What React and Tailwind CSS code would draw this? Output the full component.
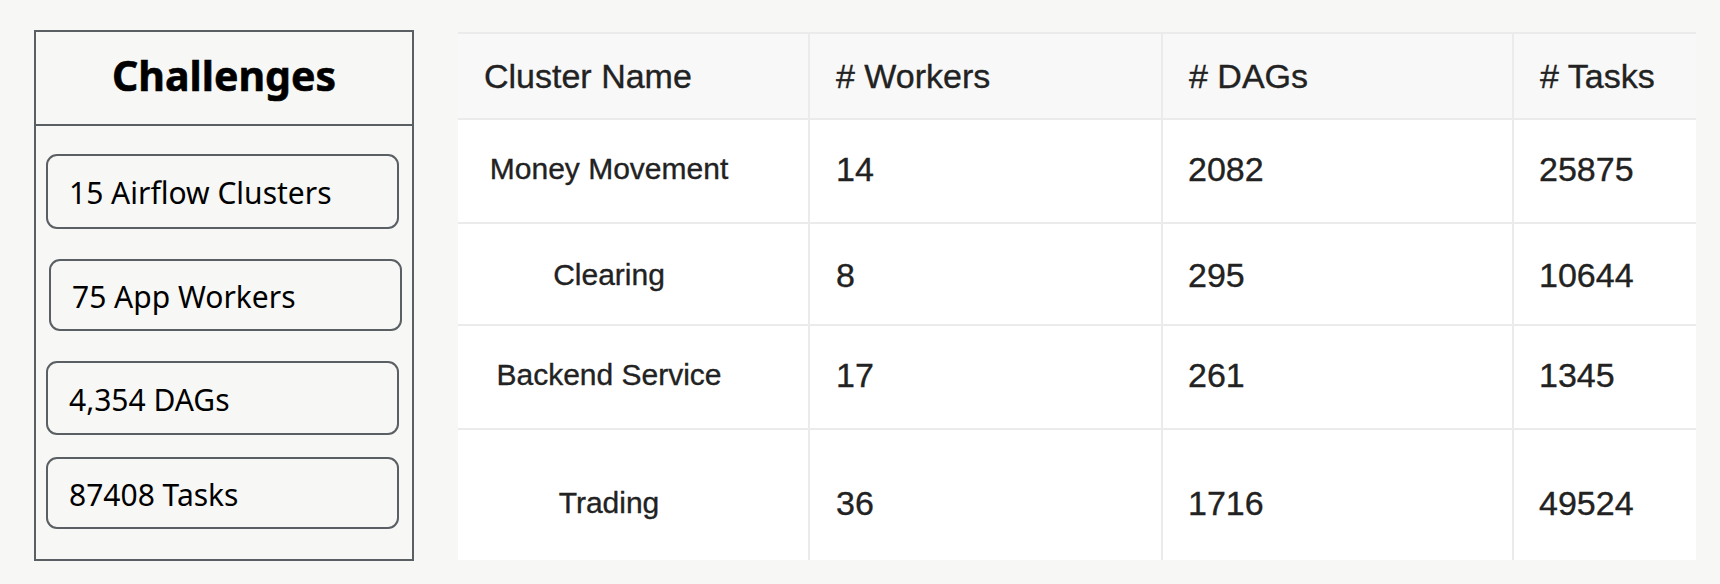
import React from "react";

const boxes = [
  { text: "15 Airflow Clusters", cls: "mt-[28px] ml-[10px] h-[75px]" },
  { text: "75 App Workers", cls: "mt-[30px] ml-[13px] h-[72px]" },
  { text: "4,354 DAGs", cls: "mt-[30px] ml-[10px] h-[74px]" },
  { text: "87408 Tasks", cls: "mt-[22px] ml-[10px] h-[72px]" },
];

const rows = [
  { name: "Money Movement", w: "14", d: "2082", t: "25875", h: "h-[104px]", pad: "pb-[5px]", last: false },
  { name: "Clearing", w: "8", d: "295", t: "10644", h: "h-[102px]", pad: "pt-[2px]", last: false },
  { name: "Backend Service", w: "17", d: "261", t: "1345", h: "h-[104px]", pad: "pb-[5px]", last: false },
  { name: "Trading", w: "36", d: "1716", t: "49524", h: "h-[130px]", pad: "pt-[16px]", last: true },
];

const colW = ["w-[352px]", "w-[353px]", "w-[351px]", "w-[182px]"];

export default function App() {
  return (
    <div className="w-[1720px] h-[584px] bg-[#f7f7f5] flex items-start overflow-hidden">
      {/* Left panel */}
      <div className="ml-[34px] mt-[30px] w-[380px] h-[531px] border-2 border-[#5a5f63] flex flex-col">
        <div className="h-[94px] flex items-center justify-center pb-[6px] border-b-2 border-[#5a5f63]">
          <span
            className="text-[41px] font-bold text-black leading-none [-webkit-text-stroke:0.6px_#000]"
            style={{ fontFamily: '"Noto Sans", sans-serif' }}
          >
            Challenges
          </span>
        </div>
        {boxes.map((b) => (
          <div
            key={b.text}
            className={`${b.cls} w-[353px] border-2 border-[#5a5f63] rounded-[11px] flex items-center pl-[21px] pt-[3px]`}
          >
            <span className="text-[30px] text-black leading-none" style={{ fontFamily: '"Noto Sans", sans-serif' }}>
              {b.text}
            </span>
          </div>
        ))}
      </div>

      {/* Table */}
      <div
        className="ml-[44px] mt-[32px] w-[1238px] flex flex-col text-[#222222] [-webkit-text-stroke:0.35px_#222222]"
        style={{ fontFamily: '"Liberation Sans", Arial, sans-serif' }}
      >
        <div className="flex h-[88px] bg-[#f8f8f8] border-t-2 border-b-2 border-[#ebebeb]">
          {["Cluster Name", "# Workers", "# DAGs", "# Tasks"].map((h, i) => (
            <div
              key={h}
              className={`${colW[i]} ${i < 3 ? "border-r-2 border-[#ebebeb]" : ""} flex items-center pl-[26px] text-[34px] leading-none`}
            >
              {h}
            </div>
          ))}
        </div>
        {rows.map((r) => (
          <div key={r.name} className={`flex ${r.h} bg-white ${r.last ? "" : "border-b-2 border-[#ebebeb]"}`}>
            <div className={`${colW[0]} border-r-2 border-[#ebebeb] flex items-center justify-center pr-[48px] ${r.pad} text-[30px] leading-none`}>
              {r.name}
            </div>
            <div className={`${colW[1]} border-r-2 border-[#ebebeb] flex items-center pl-[26px] ${r.pad} text-[34px] leading-none`}>
              {r.w}
            </div>
            <div className={`${colW[2]} border-r-2 border-[#ebebeb] flex items-center pl-[25px] ${r.pad} text-[34px] leading-none`}>
              {r.d}
            </div>
            <div className={`${colW[3]} flex items-center pl-[25px] ${r.pad} text-[34px] leading-none`}>
              {r.t}
            </div>
          </div>
        ))}
      </div>
    </div>
  );
}
